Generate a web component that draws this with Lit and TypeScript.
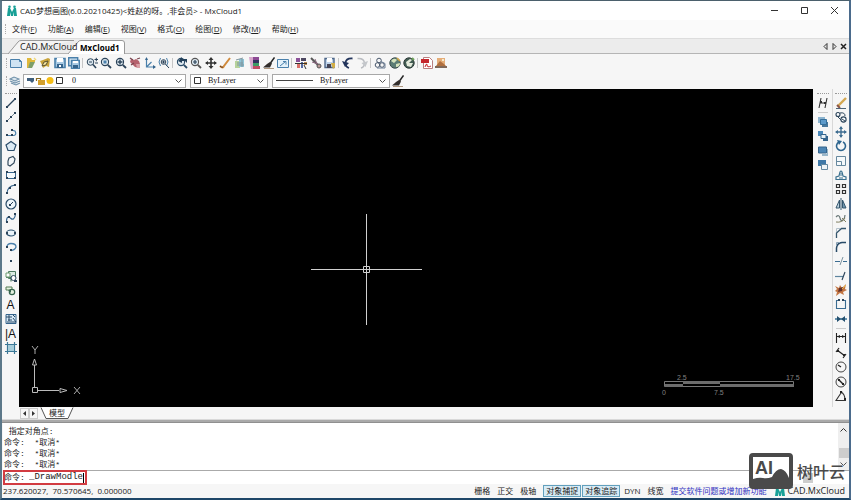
import { LitElement, html, css, svg } from "lit";
import { customElement, property } from "lit/decorators.js";

const N = "#2b4359";
const B = "#4a80ab";
const L = "#cfe3f2";
const line = (d: string, c = N, w = 1, f = "none") =>
  svg`<path d=${d} stroke=${c} stroke-width=${w} fill=${f}/>`;
const fill = (d: string, c = N) => svg`<path d=${d} fill=${c}/>`;
const dots = (pts: number[][], c = N) =>
  pts.map(([x, y]) => svg`<rect x=${x - 1} y=${y - 1} width="2" height="2" fill=${c}/>`);
const lens = (inner: unknown, c = N) =>
  svg`<circle cx="5" cy="5" r="3.6" fill="#dde8f0" stroke=${c} stroke-width="1.1"/>${line("M7.8 7.8L11 11", c, 1.8)}${inner}`;

const icons: Record<string, unknown> = {
  new: svg`${line("M.5 2.5h9l2 2v6h-11z", B, 1, L)}${line("M9.5 2.5v2h2", B)}`,
  open: svg`${fill("M2 1h4l1 2h3v2H6l-3 6H2z", "#e0b83a")}${fill("M5 5h5L7 11H3z", "#7e9f6a")}${line("M9 1l2 2", "#f0d878", 1.4)}`,
  openWeb: svg`${fill("M1 4l3-1 5-2 2 1-1 8-3-1-3 2-1-3z", "#c9a43c")}${line("M3 9l2-4 4-1-2 4z", "#5a5230", 1, "#f3e3a0")}`,
  save: svg`${line("M1 1.5h10v9H1z", B, 1.6, "#a9cae4")}${fill("M3 1h6v4H3z", "#fff")}${fill("M3 7h6v4H3z", "#35648c")}${fill("M5 8h2v2H5z", "#fff")}`,
  saveAs: svg`${line("M.7.7h9v8h-9z", B, 1.4, "#d5e6f3")}${line("M3.5 3.5h8v8h-8z", B, 1.4, "#a9cae4")}${fill("M5 4h5v2H5z", "#fff")}${fill("M5 8h5v3H5z", "#35648c")}`,
  zoomPlus: svg`<circle cx="4.500" cy="5" r="3.300" fill="#dde8f0" stroke=${N}/>${line("M7 7.500L10 11", N, 1.6)}${line("M8.500 2.500h3.500M10.300 .8v3.500M9 6h3M3 5h3", N)}`,
  zoomWin: lens(fill("M3.500 3.500h3v3h-3z", B)),
  zoomExt: lens(line("M5 2.500v5M2.500 5h5", N, 1.4)),
  pan: svg`${fill("M2 2l3 1 2-1 3 2 1 3-2 1 1 3-4-1-3-3-2-2z", "#b5616d")}${line("M1 1l3 2M8 2l3-1M2 8l3-2", "#784650", 1.3)}${fill("M7 7h4v4H8z", "#d8a0a6")}`,
  axes: svg`${line("M2.500 1v9h8.500M2.500 10l5-5", B, 1.2)}${fill("M1 3l1.500-3L4 3zM9 8l3 2-3 2z", "#35648c")}`,
  zoomAll: svg`${line("M2.500 1Q-.5 5 2.500 9M8.500 1q3 4 0 8", B)}<circle cx="5.500" cy="5" r="2.300" fill="none" stroke=${N}/>${line("M7.300 7L11 11M4 5h3M5.500 3.500v3", N)}`,
  zoomBack: svg`${lens("", "#294b68")}${fill("M2 4l4-4v2h5v4L9 4H6v2z", "#23405a")}`,
  zoomIn: lens(line("M3 5h4M5 3v4", N, 1.2), "#555"),
  move4: svg`${line("M6 1v10M1 6h10", "#333", 1.6)}${fill("M3.500 3L6 0l2.500 3zM3.500 9L6 12l2.500-3zM3 4v4L0 6zM9 4v4l3-2z", "#333")}`,
  pencil: svg`${line("M1 9q3 3 4 0L11 1", "#d08a3c", 2)}${line("M1 9q2 2 3 1", "#5e3921", 1)}`,
  layerset: svg`${fill("M1 4h5v7H1z", "#b6d29b")}${fill("M5 2h5v8H5z", "#8ec5d8")}${line("M2 3l7-2M3 6h6M3 8h7M8 2v8", "#80959d")}`,
  palette: svg`${fill("M2 0h9v3H2z", "#8c4a94")}${fill("M2 3h9v3H2z", "#343060")}${fill("M3 6h8v3H3z", "#3c9b65")}${fill("M4 9h8v3H4z", "#c04b64")}${fill("M1 0h4v12H3z", "#d6a5cb")}`,
  brush: svg`${line("M11.500 0.500L7.500 6", "#222", 1.5)}${fill("M0 10.500l4-3.500 3-2 2 1.500-2 4z", "#332e2c")}${line("M1 11.500h10", "#b09880")}`,
  screen: svg`${line("M.5 2.500h11v8H.5z", B, 1, "#e3f1fa")}${line("M3 9l5-4M6 4.500h3v3", B)}`,
  grid1: svg`${fill("M1 1h4v4H1z", "#8b5098")}${fill("M6 1h5v3H6z", "#4c4760")}${fill("M2 6h3v5H2z", "#d97068")}${fill("M6 5h2v6H6z", "#5569a3")}${fill("M9 5h3v3H9z", "#bd8b51")}${line("M0 6.500h12M9 8l2 4", "#333")}`,
  tools: svg`${line("M1 1l9 9", "#555", 2)}${line("M5 2l2 5M2 5l6 2", "#8b6780")}<circle cx="9" cy="9" r="2" fill="#b99" stroke="#555"/>`,
  doc: svg`${line("M1 1.500h9v9H1z", "#4e6789", 1.4, "#bed3ea")}${fill("M3 1h5v4H3z", "#fff")}${fill("M3 7h4v4H3z", "#445")}${fill("M7 6h4v4L9 12z", "#d2ae45")}`,
  undo: svg`${line("M10.500 1.500Q4 1 3.500 6Q3.500 10 7 11", "#23355c", 1.8)}${fill("M0 4l7 2-4 4z", "#23355c")}`,
  redo: svg`${line("M1.500 1.500Q8 1 8.500 6Q8.500 10 5 11", "#b9bcc1", 1.4)}${fill("M12 4L5.500 6l4 4z", "#c4c7cb")}`,
  link: svg`<g fill="none" stroke="#47566b"><circle cx="5" cy="3.500" r="2.300"/><circle cx="3.500" cy="8" r="2.300"/><circle cx="8" cy="8" r="2.300"/></g>${line("M7 4.500l4 2v4.500H3", "#6c7e95")}`,
  globe: svg`<circle cx="6" cy="6" r="5.200" fill="#5c7d75" stroke="#3b4d4c"/>${fill("M2 4q3-4 6-1L5 6zM7 7l4-1q0 4-4 4z", "#d7e4bd")}${line("M8 1l3 3", "#d0a848", 1.6)}`,
  globeGo: svg`<circle cx="6" cy="6" r="5.200" fill="#425c53" stroke="#2f3c39"/>${fill("M3 5l4-3 2 1-3 3h4l-2 4-4-1z", "#e4eadb")}${line("M9 1l2 2", "#6ca05a", 2)}`,
  pdf: svg`${line("M2.500.5h6l3 3v8h-9z", "#b98080", 1, "#fff")}${fill("M0 2h8v4H0z", "#c5272d")}${line("M4 10q2-5 2-2t4 1", "#c5272d")}`,
  image: svg`${fill("M2 1h8v7H2z", "#e5ad78")}${fill("M1 9l4-5 4 3 2 2z", "#b06f3f")}${fill("M0 9h12v2H0z", "#806858")}${fill("M7 2h2v2H7z", "#f6ebce")}`,
  layers: svg`${line("M1 4l4-2 5 2-4 2zM1 6l5 2 5-2M2 8l5 2 4-2", "#7192aa", 1.1, "#dbe6ee")}`,

  line: svg`${line("M2 10L10 2", N, 1.2)}${dots([[2, 10], [10, 2]])}`,
  ray: svg`${line("M1 11L11 1", "#7c8b97")}${dots([[2, 10], [6, 6], [10, 2]])}`,
  pline: svg`${line("M1 9.500h8q3-1 1-4.500L6 4", B, 1.2)}${dots([[2, 9], [7, 9], [7, 4]])}`,
  polygon: line("M6 1.500L11 5 9 10.500H3L1 5z", "#2c4e6c", 1.2, "#dcebf5"),
  blob: line("M4 3l4-1.500L10 4l-1 4-4 3-2-1V6z", "#334a5d", 1.2, "#f4f7f9"),
  rect: svg`${line("M1.500 3.500h9v6h-9z", "#35648c", 1, "#f5fafc")}${dots([[2, 3], [10, 3], [2, 9], [10, 9]])}`,
  arc: svg`${line("M2 11Q2 3 10 2", "#35648c", 1.2)}${dots([[2, 10], [5, 5], [10, 2]])}`,
  circle: svg`<circle cx="6" cy="6" r="5" fill="#edf5fa" stroke="#294b68" stroke-width="1.200"/>${line("M5 7l3-3", N)}${dots([[5, 7]])}`,
  spline: svg`${line("M1.500 10C1.500 3 4.500 5 6 6.500S10 7 10.500 2", "#35648c", 1.2)}${dots([[2, 10], [4, 5], [10, 2]])}`,
  ellipse: svg`<ellipse cx="6" cy="6" rx="4.500" ry="3" fill="#eaf4fa" stroke="#2c5270" stroke-width="1.200"/>${dots([[2, 6], [10, 6]])}`,
  ellArc: svg`${line("M2 6q0-3.500 4-3.500 5 0 5 3.500Q10 9 6 9.500", B, 1.3)}${dots([[2, 6], [6, 9]])}`,
  point: dots([[6, 6]]),
  block: svg`${line("M3.500 1.500h7v7h-7z", "#4f7c62", 1, "#dcebe2")}${line("M1 7.500h5v4", "#4f7c62", 1.2)}<circle cx="8.500" cy="8" r="2.500" fill="#fff" stroke=${N}/>${line("M1 3h4v4H1z", "#6c9a6e", 1, "#fff")}${fill("M9 10h3v2H9z")}`,
  block2: svg`${line("M1 3h6v3H1z", "#557c55", 1, "#e5f1e0")}<circle cx="7" cy="8" r="2.700" fill="#e5f1e0" stroke="#35634d" stroke-width="1.200"/>${fill("M3 6h3v3z", "#35634d")}`,
  hatch: svg`${line("M1 1.500h10v9H1z", "#35648c", 1, "#d5e6f3")}${line("M1 4h6M3 7h4M2 9h9M4 2v6M8 5l3 4M8 2l2 2", "#294b68")}`,
  region: svg`${line("M2.500 0v12M9.500 0v12M0 2.500h12M0 9.500h12", "#3c7897", 1.2)}${fill("M3 3h6v6H3z", "#a7cdda")}`,

  dimh: svg`${line("M2 11L4 1M8 11l2-10M3 6h6", "#333", 1.1)}${dots([[4, 5], [8, 6]], "#333")}`,
  front: svg`${fill("M1 1h7v6H1z", "#8db4cf")}${fill("M5 6h6v5H5z", "#4a789c")}${line("M3.500 3.500h6v5h-6z", "#356f9a", 1, "#5d9aca")}`,
  above: svg`${fill("M1 1h5v5H1z", "#4a88b9")}${fill("M6 6h5v5H6z", "#35648c")}${line("M4 4.500h5v4H4z", "#35648c", 1, "#e9f2f7")}`,
  solid: svg`${line("M1.500 2h8v6h-8z", "#35648c", 1, "#4c86b5")}${fill("M5 9h6v2H5z", "#9ab7ca")}${fill("M10 4h1v6h-1z", "#9ab7ca")}`,
  back: svg`${fill("M1 1h8v6H1z", "#3f79a8")}${line("M4.500 5.500h6v5h-6z", "#6489a1", 1, "#eef4f8")}`,

  erase: svg`${line("M3 9L11 1", "#d3a751", 2.400)}${line("M2 8l3 3", "#8c5548", 2)}${line("M1 11.500h10", "#4d6477")}`,
  copy: svg`<g fill="#f6f9fb" stroke=${N} stroke-width="1.100"><circle cx="3" cy="3.500" r="2"/><circle cx="8.500" cy="8.500" r="2.600"/></g>${line("M5 2q5-1 5 3M3 6l3 3M7 8l3 2", N)}`,
  move: svg`${line("M6 1v10M1 6h10", "#3f6d91", 1.4)}${fill("M4 3l2-3 2 3zM4 9l2 3 2-3zM3 4v4L0 6zM9 4v4l3-2z", "#3f6d91")}`,
  rotate: svg`${line("M4 2a4.500 4.500 0 1 0 4 0", "#2c648e", 1.6)}${fill("M2 0l5 1-3 4z", "#2c648e")}`,
  scale: svg`${line("M1.500 1.500h9v9h-9z", "#67889e", 1, "#f5f9fb")}${line("M1.500 6.500h5v4", "#67889e")}`,
  offset: svg`${line("M1 10.500h10V8L8 7l-1-4Q6 1 5 3L4 7 1 8z", "#3a708f", 1.2)}${line("M4 9h4M6 4v3", "#3a708f")}`,
  array: line("M1.500 1.500h3v3h-3zM7.500 1.500h3v3h-3zM1.500 7.500h3v3h-3zM7.500 7.500h3v3h-3z", "#333", 1.2),
  mirror: svg`${line("M4.500 2v8H1z", "#35566d", 1, "#bdd3e0")}${line("M7.500 2v8H11z", "#35566d", 1, "#6f94ad")}${line("M6 0v12", "#35566d")}`,
  edit: svg`${line("M1 5q3-3 4 1t3 2 2-5", "#6a7878", 1.2)}${line("M1 10q6 1 9-4M7 6l4 4", "#817f60")}`,
  chamfer: svg`${line("M1.500 11V6l5-4.500H11", "#35566d", 1.3)}${line("M1.500 5V1.500H5", "#b3c1cb")}`,
  fillet: svg`${line("M1.500 11V7Q2 2 7 1.500h4", "#294b68", 1.5)}${line("M1.500 5V1.500H5", "#8aa2b5")}`,
  trim: svg`${line("M0 6.500h5M8 6.500h4", "#3b6c91", 1.2)}${line("M5 10l3-8", "#7c929f")}`,
  extend: svg`${line("M0 6.500h8", "#5d849e", 1.2)}${line("M7 10l3-8", N, 1.1)}`,
  explode: svg`${fill("M0 2l4 2 1-3 2 3 4-4-1 5 2 1-4 2 1 3-4-2-4 3 1-4-2-1 2-2z", "#c37542")}${fill("M4 4l4-1-1 4-4 1z", "#63322c")}${line("M7 5l4-4", "#e8b74a")}`,
  breakAt: svg`${line("M4 2.500H1.500v8h9v-8H8", "#3b6c91", 1.1)}${dots([[4, 2], [8, 2]])}`,
  join: svg`${line("M0 6h12", "#2f6b91", 1.4)}${fill("M2 3l4 3-4 3zM10 3L6 6l4 3z", "#24506f")}`,
  dim: svg`${line("M1.500 1v10M10.500 1v10M1 4.500h10", "#222", 1.1)}${fill("M2 4.500L5 3v3zM10 4.500L7 3v3z", "#222")}`,
  dimA: svg`${line("M2 3l8 6M1 5l3-4M8 11l3-4", "#222", 1.2)}${dots([[3, 4], [9, 8]], "#222")}`,
  radius: svg`<circle cx="6" cy="6" r="5" fill="none" stroke="#444"/>${line("M6 6L3 4", "#222", 1.4)}`,
  diameter: svg`<circle cx="6" cy="6" r="5" fill="none" stroke="#444"/>${line("M3 3l6 6", "#222", 1.4)}${dots([[4, 4], [8, 8]], "#222")}`,
  angle: svg`${line("M11 10.500H1l6-9M6 2q4 2 4 8", "#333", 1.1)}${dots([[6, 2], [10, 9]], "#222")}`,
  logo: svg`${fill("M1 11L2 3h2l2 4 2-4h2l1 8H8L7 7v4H5V7l-1 4z", "#18a097")}<circle cx="3.500" cy="1.800" r="1.300" fill="#18a097"/><circle cx="8.500" cy="1.800" r="1.300" fill="#18a097"/>`,
};

const textIcon: Record<string, string> = { text: "A", mtext: "|A" };

@customElement("cad-icon")
class CadIcon extends LitElement {
  @property() name = "";
  static styles = css`
    :host { display: flex; justify-content: center; width: 12px; height: 12px; flex: none; color: #111; font: 12px/12px "Liberation Sans", sans-serif; white-space: nowrap; }
    svg { display: block; width: 12px; height: 12px; flex: none; }
  `;
  render() {
    return textIcon[this.name]
      ? html`<span>${textIcon[this.name]}</span>`
      : html`<svg viewBox="0 0 12 12" aria-hidden="true">${icons[this.name]}</svg>`;
  }
}

@customElement("tool-group")
class ToolGroup extends LitElement {
  @property() names = "";
  @property({ type: Boolean, reflect: true }) vertical = false;
  static styles = css`
    :host { display: block; flex: none; }
    .group { display: flex; justify-content: space-between; }
    :host([vertical]) .group { flex-direction: column; }
    button { display: block; border: 0; padding: 0; margin: 0; background: none; width: 12px; height: 12px; }
  `;
  render() {
    const list = this.names.split(" ");
    const size = Math.round((list.length - 1) * 14.4) + 12;
    return html`<div class="group" style="${this.vertical ? "height" : "width"}:${size}px">
      ${list.map((n) => html`<button aria-label=${n}><cad-icon name=${n}></cad-icon></button>`)}
    </div>`;
  }
}

const menus = [["文件", "F"], ["功能", "A"], ["编辑", "E"], ["视图", "V"], ["格式", "O"], ["绘图", "D"], ["修改", "M"], ["帮助", "H"]];
const topGroups = [
  "new open openWeb save saveAs",
  "zoomPlus zoomWin zoomExt pan axes zoomAll",
  "zoomBack zoomIn move4 pencil layerset palette brush screen",
  "grid1 tools doc",
  "undo redo",
  "link globe globeGo",
  "pdf image",
];
const leftTools = "line ray pline polygon blob rect arc circle spline ellipse ellArc point block block2 text hatch mtext region";

@customElement("app-root")
class AppRoot extends LitElement {
  static styles = css`
    :host { display: block; --ui: "Open Sans", "Noto Sans CJK SC", sans-serif; font: 8px/12px var(--ui); color: #222; }
    * { box-sizing: border-box; }
    button, input, select { font: inherit; color: inherit; margin: 0; padding: 0; border: 0; background: none; border-radius: 0; outline: 0; }
    .window { position: relative; display: flex; flex-direction: column; height: 100vh; overflow: hidden; background: #f6f6f6; border-left: 2px solid #5c7889; border-right: 2px solid #4b6b8c; border-bottom: 2px solid #1e4668; border-top: 1px solid #4b606c; }
    .title { display: flex; align-items: center; height: 19px; background: #fff; padding-left: 4px; flex: none; }
    .title h1 { flex: 1; font: inherit; margin: 0 0 0 2px; white-space: nowrap; }
    .title svg { display: block; width: 9px; height: 9px; }
    .title button { width: 30px; display: flex; justify-content: center; }
    .menu { display: flex; align-items: center; gap: 11px; height: 18px; padding-left: 3px; background: #fafafa; flex: none; }
    .menu .grip { margin-right: -5px; }
    .menu button { white-space: nowrap; }
    .grip { width: 1px; height: 10px; border-left: 1px dotted #aaa; flex: none; }
    .tabs { display: flex; height: 16px; align-items: stretch; background: #ececec; border-top: 1px solid #ddd; border-bottom: 1px solid #b5b5b5; padding-left: 6px; flex: none; }
    .tab { position: relative; padding: 2px 0 0 12px; line-height: 12px; width: 66px; text-align: left; white-space: nowrap; font-size: 9px; }
    .tab span { position: relative; z-index: 1; }
    .tab svg { position: absolute; left: 0; top: 1px; width: 100%; height: 14px; }
    .tab.on { width: 57px; margin-left: -6px; height: 15px; font-size: 8px; font-weight: 700; color: #000; }
    .tabs .nav { margin-left: auto; display: flex; align-items: center; gap: 2px; padding-right: 2px; }
    .nav svg, .sheets svg { display: block; width: 7px; height: 7px; }
    .bar { display: flex; align-items: center; height: 17px; padding-left: 4px; gap: 3px; flex: none; }
    .bar.first { height: 18px; }
    .bar.second { gap: 2px; }
    .sep { width: 1px; height: 10px; background: #c6c6c6; flex: none; margin-left: -1px; }
    .combo { position: relative; display: flex; align-items: center; gap: 1px; height: 14px; border: 1px solid #a8a8a8; background: #fff; padding-left: 3px; font: 8px/12px "Liberation Serif", serif; color: #111; }
    .combo select { appearance: none; flex: 1; align-self: stretch; padding: 0 14px 0 6px; min-width: 0; }
    .combo svg { display: block; height: 9px; flex: none; }
    .combo .chev { position: absolute; right: 3px; top: 4px; width: 7px; height: 4px; pointer-events: none; }
    .layer { width: 163px; } .color { width: 78px; margin-left: 2px; } .ltype { width: 118px; margin-left: 2px; }
    .body { display: flex; flex: 1; min-height: 0; }
    .side { flex: none; display: flex; flex-direction: column; align-items: center; padding-top: 4px; gap: 3px; }
    .hgrip { width: 12px; border-top: 1px dotted #999; }
    .left { width: 17px; }
    .r1 { width: 19px; }
    .r2 { width: 17px; border-left: 1px solid #d8d8d8; }
    .hsep { width: 10px; height: 1px; background: #ccc; }
    .canvas { position: relative; flex: 1; min-width: 0; background: #000; overflow: hidden; }
    .canvas svg { position: absolute; display: block; font: 7px "Liberation Sans", sans-serif; }
    .cross { left: 292px; top: 125px; width: 111px; height: 111px; }
    .ucs { left: 12px; bottom: 9px; width: 52px; height: 52px; }
    .ruler { right: 10px; bottom: 9px; width: 146px; height: 26px; }
    .sheets { display: flex; align-items: center; height: 12px; padding-left: 18px; flex: none; }
    .sheets .step { width: 9px; height: 11px; border: 1px solid #ccc; display: flex; align-items: center; justify-content: center; }
    .sheet { position: relative; width: 34px; height: 12px; line-height: 12px; text-align: center; margin-left: 2px; }
    .sheet span { position: relative; }
    .sheets .sheet svg { position: absolute; left: 0; top: 0; width: 34px; height: 12px; }
    .split { height: 4px; background: #a9a9a9; border-top: 1px solid #d9d9d9; border-bottom: 1px solid #909090; flex: none; }
    .cmd { flex: none; background: #fff; margin-left: 1px; font: 8px/11px "Liberation Mono", "Noto Sans CJK SC", monospace; }
    .log { display: flex; height: 48px; border-bottom: 1px solid #aaa; }
    .log pre { margin: 0; padding: 3px 0 0 1px; flex: 1; font: inherit; }
    .scroll { width: 11px; background: #efefef; display: flex; flex-direction: column; align-items: center; justify-content: space-between; padding: 5px 0 4px; }
    .scroll i { width: 10px; height: 10px; background: #cdcdcd; margin-top: 12px; }
    .scroll svg { width: 7px; height: 4px; }
    .entry { position: relative; display: flex; align-items: center; height: 13px; }
    .entry label { padding-left: 1px; width: 26px; white-space: nowrap; }
    .entry input { flex: 1; font: 9px/11px "Liberation Mono", monospace; }
    .entry .thumb { width: 10px; height: 10px; background: #cdcdcd; margin-right: 36px; }
    .mark { position: absolute; left: 0; top: -1px; width: 84px; height: 15px; border: 2px solid #d23b41; pointer-events: none; }
    .caret { position: absolute; left: 80px; top: 2px; width: 1px; height: 10px; background: #000; }
    .status { display: flex; align-items: center; height: 14px; padding: 0 4px 0 1px; flex: none; white-space: pre; }
    .status output { flex: 1; }
    .modes { display: flex; align-items: center; gap: 7px; }
    .modes .on { height: 12px; line-height: 10px; width: 38px; border: 1px solid #62a0bd; background: #d8ebf5; }
    .modes .on + .on { margin-left: -6px; }
    .modes .on.last { margin-right: -3px; }
    .modes a { color: #3030c0; text-decoration: none; }
    .brand { display: flex; align-items: center; gap: 2px; font-size: 9px; }
    .water { position: absolute; right: 4px; bottom: 9px; display: flex; align-items: center; gap: 4px; color: #4a4a4a; font: 500 16px/24px "Noto Sans CJK SC", sans-serif; }
    .water svg { display: block; width: 44px; height: 36px; font: 700 18px "Liberation Sans", sans-serif; }
  `;

  chev = svg`<path d="M.5.5l3 3 3-3" fill="none" stroke="#555"/>`;

  render() {
    return html`<div class="window">
      <header class="title">
        <cad-icon name="logo"></cad-icon>
        <h1>CAD梦想画图(6.0.20210425)&lt;姓赵的呀。,非会员&gt;  - MxCloud1</h1>
        <button aria-label="Minimize"><svg viewBox="0 0 9 9">${line("M1 4.500h7", "#333")}</svg></button>
        <button aria-label="Maximize"><svg viewBox="0 0 9 9">${line("M1.500 1.500h6v6h-6z", "#333")}</svg></button>
        <button aria-label="Close"><svg viewBox="0 0 9 9">${line("M1 1l7 7M8 1L1 8", "#333")}</svg></button>
      </header>
      <nav class="menu"><span class="grip"></span>${menus.map(([t, k]) => html`<button>${t}(<u>${k}</u>)</button>`)}</nav>
      <div class="tabs">
        <button class="tab"><svg viewBox="0 0 66 14">${line("M0 14L10 2Q11 .5 13 .5H66", "#999", 1, "#f4f4f4")}</svg><span>CAD.MxCloud</span></button>
        <button class="tab on"><svg viewBox="0 0 57 14">${line("M0 14L10 2Q11 .5 13 .5H54Q56.500 .5 56.500 3V14", "#999", 1, "#fff")}</svg><span>MxCloud1</span></button>
        <div class="nav">
          <button aria-label="Previous"><svg viewBox="0 0 7 7">${line("M5 .5v6l-3-3z", "#333")}</svg></button>
          <button aria-label="Next"><svg viewBox="0 0 7 7">${line("M2 .5v6l3-3z", "#333")}</svg></button>
          <button aria-label="Close tab"><svg viewBox="0 0 7 7">${line("M1 1l5 5M6 1L1 6", "#222", 1.5)}</svg></button>
        </div>
      </div>
      <div class="bar first"><span class="grip"></span>${topGroups.map((g, i) => html`${i ? html`<span class="sep"></span>` : ""}<tool-group names=${g}></tool-group>`)}</div>
      <div class="bar second"><span class="grip"></span><cad-icon name="layers"></cad-icon>
        <div class="combo layer">
          <svg width="38" viewBox="0 0 38 9">${fill("M0 2h7v3L5 7 3 5H0z", "#3f5f7d")}${line("M9.500 5V2.500h4V4", "#8a6a20", 1.2)}${fill("M11 4h7v5h-7z", "#d3a02c")}<circle cx="23" cy="4.500" r="3.500" fill="#f5bd16"/>${line("M29.500 1.500h6v6h-6z", "#333")}</svg>
          <select aria-label="图层"><option>0</option></select><svg class="chev" viewBox="0 0 7 4">${this.chev}</svg>
        </div>
        <div class="combo color">
          <svg width="7" viewBox="0 0 7 9">${line("M.5 1.500h6v6h-6z", "#333")}</svg>
          <select aria-label="颜色"><option>ByLayer</option></select><svg class="chev" viewBox="0 0 7 4">${this.chev}</svg>
        </div>
        <div class="combo ltype">
          <svg width="37" viewBox="0 0 37 9">${line("M0 4.500h37", "#444")}</svg>
          <select aria-label="线型"><option>ByLayer</option></select><svg class="chev" viewBox="0 0 7 4">${this.chev}</svg>
        </div>
        <cad-icon name="brush"></cad-icon>
      </div>
      <main class="body">
        <div class="side left"><span class="hgrip"></span><tool-group vertical names=${leftTools}></tool-group></div>
        <div class="canvas">
          <svg class="cross" viewBox="0 0 111 111">${line("M0 55.500h111M55.500 0v111M52.500 52.500h6v6h-6z", "#d0d0d0")}</svg>
          <svg class="ucs" viewBox="0 0 52 52">
            ${line("M1.500 41.500h5v5h-5zM3.500 41V19M6 44.500h22M3.500 13l2 6h-4zM36 44.500l-7-2v4z", "#bbb")}
            ${line("M1 0l3 4 3-4M4 4v4M43 41l6 7M49 41l-6 7", "#aaa")}
          </svg>
          <svg class="ruler" viewBox="0 0 146 26" fill="#808080">
            ${line("M7.500 9.500h129v5h-129z", "#777")}${fill("M8 12h18v3H8zM26 9h37v3H26zM63 12h74v3H63z", "#6c6c6c")}
            <text x="20" y="8">2.5</text><text x="129" y="8">17.5</text><text x="5" y="23">0</text><text x="57" y="23">7.5</text>
          </svg>
        </div>
        <div class="side r1"><span class="hgrip"></span><tool-group vertical names="dimh"></tool-group><span class="hsep"></span><tool-group vertical names="front above solid back"></tool-group></div>
        <div class="side r2"><span class="hgrip"></span>
          <tool-group vertical names="erase copy move rotate scale offset array mirror edit chamfer fillet trim extend explode breakAt join"></tool-group>
          <span class="hsep"></span>
          <tool-group vertical names="dim dimA radius diameter angle"></tool-group>
        </div>
      </main>
      <div class="sheets">
        <button class="step" aria-label="Previous sheet"><svg viewBox="0 0 7 7">${fill("M5 1v5L2 3.500z", "#333")}</svg></button>
        <button class="step" aria-label="Next sheet"><svg viewBox="0 0 7 7">${fill("M2 1v5l3-2.500z", "#333")}</svg></button>
        <button class="sheet"><svg viewBox="0 0 34 12">${line("M1 .5l5 11h22L33 .5", "#555", 1, "#fff")}</svg><span>模型</span></button>
      </div>
      <div class="split"></div>
      <section class="cmd">
        <div class="log"><pre> 指定对角点:
命令:  *取消*
命令:  *取消*
命令:  *取消*</pre>
          <div class="scroll"><svg viewBox="0 0 7 4">${line("M.5 3.500l3-3 3 3", "#333")}</svg><i></i><svg viewBox="0 0 7 4">${this.chev}</svg></div>
        </div>
        <div class="entry"><label for="cmd">命令:</label><input id="cmd" value="_DrawModle" /><span class="thumb"></span><span class="caret"></span><span class="mark"></span></div>
      </section>
      <footer class="status">
        <output>237.620027,  70.570645,  0.000000</output>
        <div class="modes"><button>栅格</button><button>正交</button><button>极轴</button><button class="on">对象捕捉</button><button class="on last">对象追踪</button><button>DYN</button><button>线宽</button><a href="#">提交软件问题或增加新功能</a><span class="brand"><cad-icon name="logo"></cad-icon>CAD.MxCloud</span></div>
      </footer>
      <div class="water">
        <svg viewBox="0 0 44 36"><rect x="2" y="2" width="40" height="32" rx="2" fill="#fff" stroke="#4a4a4a" stroke-width="4"/><path d="M4 26q6-2 10-1t9-1q4-8 9-8 5 1 8 9v8H4z" fill="#4a4a4a"/><text x="6" y="21" fill="#4a4a4a">AI</text></svg>
        <span>树叶云</span>
      </div>
    </div>`;
  }
}
